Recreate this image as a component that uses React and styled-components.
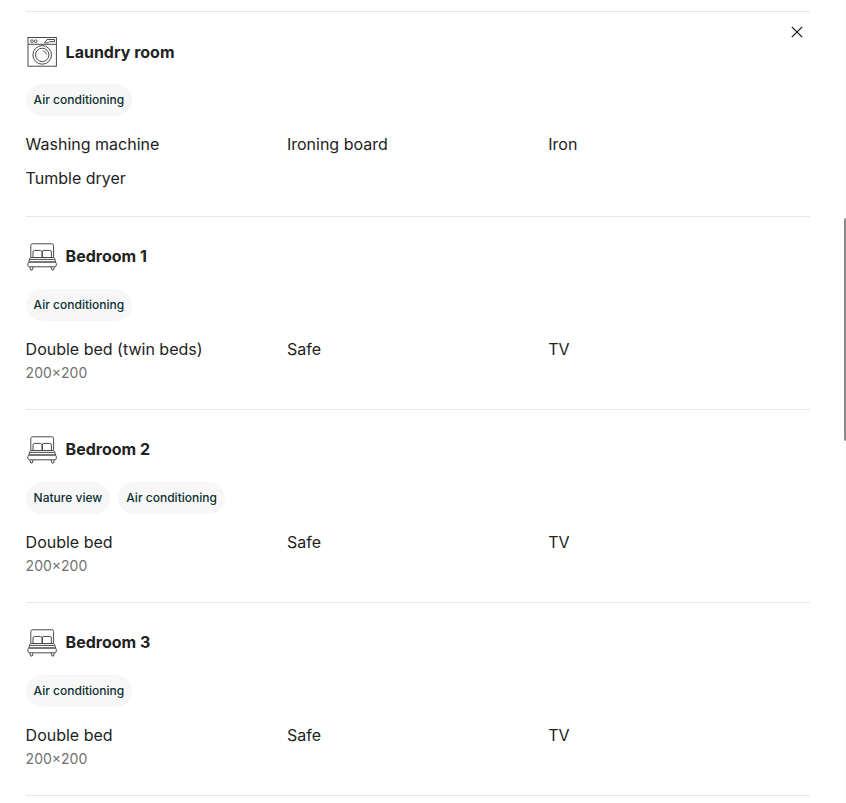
import React from "react";
import styled, { createGlobalStyle } from "styled-components";

const GlobalStyle = createGlobalStyle`
  *, *::before, *::after { box-sizing: border-box; }
  body { margin: 0; background: #fff; font-family: Inter, sans-serif; color: #222; }
`;

const Dialog = styled.main`
  position: relative;
  height: 803px;
  overflow: hidden;
  padding: 11px 36.4px 0 25.6px;
`;

const CloseButton = styled.button`
  position: absolute;
  top: 24px;
  right: 41px;
  width: 16px;
  height: 16px;
  padding: 0;
  border: 0;
  background: none;
  color: #111;
  svg { display: block; }
`;

const ScrollTrack = styled.div`
  position: absolute;
  top: 0;
  right: 0;
  bottom: 0;
  width: 2px;
  background: #fcfcfc;
`;

const ScrollThumb = styled.div`
  position: absolute;
  top: 218px;
  right: 0;
  width: 2px;
  height: 223px;
  border-radius: 2px 0 0 2px;
  background: #8b8b8b;
`;

const Room = styled.section`
  border-top: 1px solid #e8e8e8;
  padding: 24px 0;
`;

const RoomHeader = styled.header`
  display: flex;
  align-items: center;
  gap: 8px;
  height: 32px;
  margin-bottom: 16px;
  svg { flex: none; }
`;

const Title = styled.h2`
  margin: 0;
  padding-bottom: ${({ $lift }) => ($lift ? "2px" : 0)};
  font-size: 16px;
  line-height: 24px;
  font-weight: 700;
`;

const Tags = styled.div`
  display: flex;
  gap: 8px;
  margin-bottom: 15px;
`;

const Tag = styled.span`
  height: 32px;
  padding: 0 8px;
  border-radius: 16px;
  background: #f7f7f7;
  color: #0c2f33;
  font-size: 12px;
  letter-spacing: 0.01px;
  line-height: 32px;
  font-weight: 500;
`;

const Amenities = styled.ul`
  display: grid;
  grid-template-columns: repeat(3, 1fr);
  row-gap: 8px;
  margin: 0;
  padding: 0 0 1px;
  list-style: none;
`;

const Amenity = styled.li`
  font-size: 16px;
  line-height: 26px;
`;

const Size = styled.div`
  color: #717171;
  font-size: 14px;
  line-height: 22px;
`;

const Line = styled.svg.attrs({ width: 32, height: 32, viewBox: "0 0 32 32", fill: "none" })`
  stroke: #4a4a4a;
  stroke-width: 1;
`;

const WasherIcon = () => (
  <Line>
    <rect x="2" y="1.5" width="28.4" height="28.7" />
    <path d="M2 8.3h28.4" />
    <circle cx="6" cy="5.2" r="1.4" strokeWidth=".9" />
    <circle cx="9.8" cy="5.2" r="1.4" strokeWidth=".9" />
    <path d="M18.5 6.8l2.5-3.3h7.5v2.2h-5l-1.2 1.1z" />
    <circle cx="16.2" cy="18.9" r="9.3" />
    <circle cx="16.2" cy="18.9" r="6.7" />
    <path d="M16.7 14.8a4.2 4.2 0 0 1 3.8 3.8" strokeWidth=".8" />
  </Line>
);

const BedIcon = () => (
  <Line>
    <path d="M4.8 16.5V4.6q0-1.8 1.8-1.8h19.2q1.8 0 1.8 1.8v11.9" />
    <path d="M7 16.3v-5.2q0-1.7 1.7-1.7h5.8q1.5 0 1.5 1.7v5.2M16.4 16.3v-5.2q0-1.7 1.5-1.7h5.8q1.7 0 1.7 1.7v5.2" />
    <path d="M4.8 16.5h22.8q1.2 0 1.9 4.5h-26.6q.7-4.5 1.9-4.5zM3.8 18.4h24.8" />
    <rect x="1.9" y="21" width="28.4" height="4.8" rx="1.6" />
    <path d="M3.8 25.8l.9 3.2h1.5l1-3.2M25 25.8l1 3.2h1.5l.9-3.2" />
  </Line>
);

const bedroom = (name, tags, bed) => ({
  name, tags, Icon: BedIcon, lift: true,
  items: [{ label: bed, size: "200×200" }, { label: "Safe" }, { label: "TV" }],
});

const rooms = [
  {
    name: "Laundry room",
    tags: ["Air conditioning"],
    Icon: WasherIcon,
    items: ["Washing machine", "Ironing board", "Iron", "Tumble dryer"].map((label) => ({ label })),
  },
  bedroom("Bedroom 1", ["Air conditioning"], "Double bed (twin beds)"),
  bedroom("Bedroom 2", ["Nature view", "Air conditioning"], "Double bed"),
  bedroom("Bedroom 3", ["Air conditioning"], "Double bed"),
];

const EndRule = styled.div`
  border-top: 1px solid #e8e8e8;
`;

export default function App() {
  return (
    <>
      <GlobalStyle />
      <Dialog>
        {rooms.map(({ name, tags, Icon, items, lift }) => (
          <Room key={name}>
            <RoomHeader>
              <Icon />
              <Title $lift={lift}>{name}</Title>
            </RoomHeader>
            <Tags>{tags.map((tag) => <Tag key={tag}>{tag}</Tag>)}</Tags>
            <Amenities>
              {items.map(({ label, size }) => (
                <Amenity key={label}>
                  {label}
                  {size && <Size>{size}</Size>}
                </Amenity>
              ))}
            </Amenities>
          </Room>
        ))}
        <EndRule />
        <CloseButton aria-label="Close">
          <svg width="16" height="16" viewBox="0 0 16 16" fill="none" stroke="currentColor" strokeWidth="1.2">
            <path d="M2.8 2.8l10.4 10.4M13.2 2.8L2.8 13.2" />
          </svg>
        </CloseButton>
        <ScrollTrack />
        <ScrollThumb />
      </Dialog>
    </>
  );
}
